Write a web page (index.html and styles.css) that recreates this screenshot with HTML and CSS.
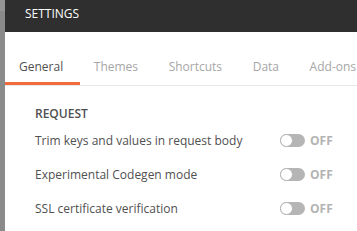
FILE: index.html
```html
<!DOCTYPE html>
<html>
<head>
<meta charset="utf-8">
<link rel="stylesheet" href="styles.css">
</head>
<body>
<div class="backdrop">
  <div class="modal">
    <div class="modal-header">SETTINGS</div>
    <div class="tabs">
      <div class="tab active">General</div>
      <div class="tab">Themes</div>
      <div class="tab">Shortcuts</div>
      <div class="tab">Data</div>
      <div class="tab">Add-ons</div>
    </div>
    <div class="content">
      <div class="section-title">REQUEST</div>
      <div class="row">
        <div class="label">Trim keys and values in request body</div>
        <div class="toggle"><span class="track"><span class="knob"></span></span><span class="state">OFF</span></div>
      </div>
      <div class="row">
        <div class="label">Experimental Codegen mode</div>
        <div class="toggle"><span class="track"><span class="knob"></span></span><span class="state">OFF</span></div>
      </div>
      <div class="row">
        <div class="label">SSL certificate verification</div>
        <div class="toggle"><span class="track"><span class="knob"></span></span><span class="state">OFF</span></div>
      </div>
    </div>
  </div>
</div>
</body>
</html>
```
FILE: styles.css
```css
html, body {
  margin: 0;
  padding: 0;
  width: 357px;
  height: 231px;
  overflow: hidden;
  font-family: "Open Sans", "Liberation Sans", sans-serif;
  font-size: 12px;
}
.backdrop {
  display: flex;
  height: 231px;
  background: linear-gradient(#959595 0, #959595 11px, #8a8a8a 11px);
  padding-left: 5px;
}
.modal {
  flex: 1;
  background: #fff;
  display: flex;
  flex-direction: column;
  min-width: 0;
}
.modal-header {
  height: 32px;
  background: #2f2f2f;
  color: #fff;
  font-size: 12px;
  line-height: 27px;
  padding-left: 20px;
}
.tabs {
  display: flex;
  padding-top: 27px;
  border-bottom: 1px solid #e8e8e8;
  white-space: nowrap;
}
.tab {
  padding: 0 16.6px 7px 14px;
  line-height: 16px;
  color: #a6a6a6;
  border-bottom: 3px solid transparent;
  flex: none;
}
.tab.active {
  color: #505050;
  border-bottom-color: #f26b3a;
}
.content {
  padding: 20px 0 0 30px;
}
.section-title {
  color: #505050;
  font-weight: 600;
  line-height: 16px;
  margin-bottom: 1px;
}
.row {
  display: flex;
  align-items: center;
  height: 34px;
  color: #505050;
}
.label {
  width: 245px;
}
.toggle {
  display: flex;
  align-items: center;
  gap: 5px;
}
.track {
  width: 25px;
  height: 13px;
  border-radius: 7px;
  background: #b5b5b5;
  position: relative;
  box-sizing: border-box;
}
.knob {
  position: absolute;
  left: 0;
  top: 0;
  width: 13px;
  height: 13px;
  box-sizing: border-box;
  border-radius: 50%;
  background: #fff;
  border: 1px solid #b5b5b5;
}
.state {
  font-weight: 700;
  color: #b3b3b3;
  font-size: 12px;
}
```
